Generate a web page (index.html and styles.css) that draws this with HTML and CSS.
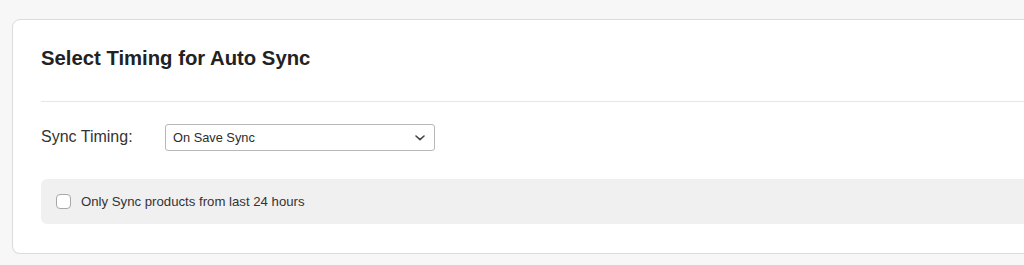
FILE: index.html
```html
<!DOCTYPE html>
<html lang="en">
<head>
    <meta charset="UTF-8">
    <meta name="viewport" content="width=device-width, initial-scale=1.0">
    <title>Auto Sync Settings</title>
    <link rel="stylesheet" href="styles.css">
</head>
<body>
    <section class="sync-card">
        <h2 class="sync-title">Select Timing for Auto Sync</h2>

        <div class="sync-body">
            <div class="form-row">
                <label for="syncTiming">Sync Timing:</label>
                <div class="select-wrap">
                    <select id="syncTiming" name="syncTiming">
                        <option value="save">On Save Sync</option>
                        <option value="hourly">Hourly</option>
                        <option value="daily">Daily</option>
                    </select>
                    <svg class="chevron" width="10" height="6" viewBox="0 0 10 6" aria-hidden="true">
                        <path d="M1 1l4 3.6L9 1" fill="none" stroke="#444" stroke-width="1.6" stroke-linecap="round" stroke-linejoin="round"/>
                    </svg>
                </div>
            </div>

            <div class="option-box">
                <label class="check-label">
                    <input type="checkbox" name="last24">
                    <span>Only Sync products from last 24 hours</span>
                </label>
            </div>
        </div>
    </section>
</body>
</html>
```

FILE: styles.css
```css
/* Base */
body {
    font-family: "Liberation Sans", Arial, sans-serif;
    background-color: #f7f7f7;
    margin: 0;
    padding: 19px 0 0 12px;
    overflow: hidden;
}

/* Card */
.sync-card {
    background-color: #ffffff;
    border: 1px solid #dcdcdc;
    border-radius: 8px;
    margin-right: -30px;
    padding: 0 0 29px 28px;
    box-shadow: 0 1px 1px rgba(0, 0, 0, 0.04);
}

.sync-title {
    margin: 0;
    padding: 26px 0 31px;
    font-size: 20.3px;
    font-weight: 700;
    color: #222;
    line-height: 24px;
    border-bottom: 1px solid #e6e6e6;
}

.sync-body {
    padding-top: 21px;
}

.form-row {
    display: flex;
    align-items: center;
    height: 28px;
}

.form-row label {
    width: 124px;
    font-size: 16px;
    color: #333;
}

.select-wrap {
    position: relative;
    width: 270px;
}

select {
    appearance: none;
    -webkit-appearance: none;
    width: 100%;
    height: 27px;
    padding: 0 24px 0 7px;
    border: 1px solid #b8b8b8;
    border-radius: 3px;
    background-color: #fff;
    font-family: "Liberation Sans", Arial, sans-serif;
    font-size: 12.8px;
    color: #2c2c2c;
    box-sizing: border-box;
}

.chevron {
    position: absolute;
    right: 10px;
    top: 11px;
    pointer-events: none;
}

/* Checkbox box */
.option-box {
    margin-top: 28px;
    background-color: #f0f0f0;
    border-radius: 6px 0 0 6px;
    height: 45px;
    display: flex;
    align-items: center;
    padding-left: 15px;
}

.check-label {
    display: flex;
    align-items: center;
    font-size: 13.2px;
    color: #333;
}

.check-label input {
    appearance: none;
    -webkit-appearance: none;
    width: 15px;
    height: 15px;
    margin: 0 10px 0 0;
    border: 1px solid #a8a8a8;
    border-radius: 4px;
    background-color: #fff;
}
```
